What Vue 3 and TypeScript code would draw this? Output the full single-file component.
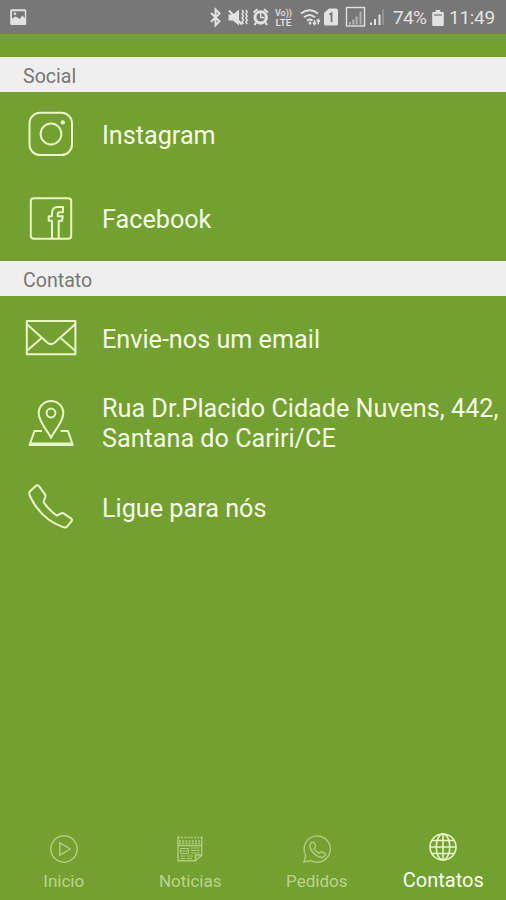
<script setup lang="ts">
import { ref } from 'vue'

type IconName = 'instagram' | 'facebook' | 'email' | 'map' | 'phone'

interface Entry {
  icon: IconName
  label: string
}

interface Section {
  title: string
  entries: Entry[]
}

const sections: Section[] = [
  {
    title: 'Social',
    entries: [
      { icon: 'instagram', label: 'Instagram' },
      { icon: 'facebook', label: 'Facebook' },
    ],
  },
  {
    title: 'Contato',
    entries: [
      { icon: 'email', label: 'Envie-nos um email' },
      { icon: 'map', label: 'Rua Dr.Placido Cidade Nuvens, 442, Santana do Cariri/CE' },
      { icon: 'phone', label: 'Ligue para nós' },
    ],
  },
]

const tabs: string[] = ['Inicio', 'Noticias', 'Pedidos', 'Contatos']
const active = ref('Contatos')
</script>

<template>
  <div class="screen">
    <header class="status">
      <svg class="picture" width="18" height="18" viewBox="0 0 18 18">
        <rect x="1.2" y="1.2" width="16" height="15.800" rx="1.500" class="solid" />
        <path d="M3 3.200h12.800v6.800l-2.500-2.500-2.500 3.500-4-2.500L3 10.500z" class="hole" />
        <circle cx="6" cy="5.700" r="1.300" class="solid" />
      </svg>
      <div class="tray">
        <svg width="174" height="34" viewBox="0 0 174 34">
          <path d="M1 13l8.500 8.300-4 4V9.500l4 4L1 21.800" class="line thick" />
          <path d="M18.500 14.500h4.500l6-5v16l-6-5h-4.500z" class="solid" />
          <path d="M19 10.500l13 14" class="line thick" />
          <path d="M32 10l1.500 2-1.500 2 1.500 2-1.500 2 1.500 2-1.500 2 1.500 2M35.800 10l1.500 2-1.500 2 1.500 2-1.500 2 1.500 2-1.500 2 1.500 2" class="line" />
          <path d="M43.500 12.500l4-3.300M54 9.200l4 3.300M46 22.500l-1.500 2.500M55.500 22.500l1.500 2.500" class="line thick" />
          <circle cx="50.700" cy="17.500" r="7.200" class="solid" />
          <circle cx="50.700" cy="17.200" r="4.300" class="hole" />
          <path d="M50.700 13v4.500h3.800" class="line" />
          <text x="65" y="15.600" class="volte" textLength="17" lengthAdjust="spacingAndGlyphs">Vo))</text>
          <text x="65.500" y="26" class="volte" textLength="16" lengthAdjust="spacingAndGlyphs">LTE</text>
          <path d="M91 13.500q8.500-6.500 17 0M94 17.200q5.500-4.500 11 0M97 20.500q2.800-2 5.500 0" class="line thick" />
          <circle cx="100" cy="23" r="1.500" class="solid" />
          <path d="M104.500 20v4m-1.500-1.500 1.500 2 1.500-2M108.300 24.500v-4.500m-1.500 1.500 1.500-2 1.500 2" class="line" />
          <path d="M119 8.500h7q2 0 2 2v13.500q0 1.500-1.500 1.500h-11q-1.500 0-1.500-1.500V13z" class="solid" />
          <path d="M119.300 14.500l2.200-1.200v8.700" class="digit" />
          <rect x="136.500" y="7.500" width="18" height="18.500" class="line" />
          <path d="M140 22v2.500M143.300 19.500v5M146.600 16.500v8" class="line thick dim" />
          <path d="M150.500 11.500v13" class="line thick dim" />
          <path d="M161 22.500v2.500M165 19v6" class="line thick" />
          <path d="M169.500 14.500V25" class="line thick" />
          <path d="M173 9v16" class="line thick faint" />
        </svg>
        <span class="level">74%</span>
        <svg class="battery" width="12" height="18" viewBox="0 0 12 18">
          <path d="M3.700 1h4.600v2h2.500q1 0 1 1v12q0 1-1 1H1.200q-1 0-1-1V4q0-1 1-1h2.500z" class="solid" />
          <path d="M2 6h8" class="mark" />
        </svg>
        <span class="clock">11:49</span>
      </div>
    </header>

    <main class="content">
      <section v-for="section in sections" :key="section.title">
        <h2 class="heading">{{ section.title }}</h2>
        <a v-for="entry in section.entries" :key="entry.label" class="entry">
          <svg class="icon" width="102" height="84" viewBox="0 0 102 84">
            <template v-if="entry.icon === 'instagram'">
              <rect x="29.500" y="20.800" width="42.500" height="42.300" rx="10.500" />
              <circle cx="51" cy="42" r="10.400" />
              <circle cx="62.700" cy="30.400" r="1.200" />
            </template>
            <template v-else-if="entry.icon === 'facebook'">
              <rect x="30.800" y="21.300" width="40.400" height="40.400" rx="3" />
              <path d="M52 61.500V43.800h-3.300v-4.500H52v-3q0-6.300 6-6.300h5v5.300h-3q-2.300 0-2.300 2v2h5l-.7 4.500h-3.300v17.700" />
            </template>
            <template v-else-if="entry.icon === 'email'">
              <rect x="26.800" y="25" width="48.600" height="33.300" />
              <path d="M27 28.200l20.500 18.500q3.500 2.800 7 0L75.200 28.200M27 54.700l14-12.300M75.200 54.700L61.200 42.400" />
            </template>
            <template v-else-if="entry.icon === 'map'">
              <path d="M51 57C49 51.200 38.700 41.200 38.700 32.200a12.300 12.300 0 0 1 24.600 0C63.300 41.200 53 51.200 51 57z" />
              <circle cx="51" cy="32" r="4.400" />
              <path d="M42 50h-7.500L29.500 64h43.300l-4.800-14h-7.500M31 62.500h40" />
            </template>
            <template v-else>
              <path d="M30 26.200l6-5.500q1.800-1 3 .5l6.200 8.500q.8 1.500-.2 3l-1.500 4.500q6 8.500 13.500 13.500l4-2.300q1.500-.7 3 .3l7.300 5q1.200 1 .2 2.500l-4.500 5.500q-1.500 1.300-4.500.2C47 56.200 36.500 44.700 30.300 31.700q-1.800-3.500-.3-5.500z" />
            </template>
          </svg>
          <span class="label">{{ entry.label }}</span>
        </a>
      </section>
    </main>

    <nav class="tabs">
      <button v-for="tab in tabs" :key="tab" class="tab" :class="{ active: tab === active }" @click="active = tab">
        <svg width="30" height="30" viewBox="0 0 30 30">
          <template v-if="tab === 'Inicio'">
            <circle cx="15" cy="15" r="13.200" />
            <path d="M10.800 8.800v12.400L21.200 15z" />
          </template>
          <template v-else-if="tab === 'Noticias'">
            <path d="M3 2.500v24.300h17.500l6.200-5.500V2.500M20.500 26.500v-5.500h6M3 11.500h23.500" />
            <path d="M3 3.500h24M4 7h22M4 9.300h22" class="dashed" />
            <path d="M5.500 14.500h8v5h-8zM6 17h7M16 14h8.500M16 16.500h8.500M16 19h8.500M5.500 22h5M12 22h6M5.500 24.500h5M12 24.500h5" class="small" />
          </template>
          <template v-else-if="tab === 'Pedidos'">
            <path d="M2 28l1.700-6.700A13.100 13.100 0 1 1 9 26.600z" />
            <path d="M9.200 8.700l1.500-.5q1.200-.2 1.800 1l1 2.600q.3 1-.6 1.900l-.8.8q2 3.500 5.200 5l1.300-1.400q.6-.7 1.500-.3l2.900 1.500q.9.600.4 1.700-.8 2.300-3.500 2.500C14 23 8 16.800 7.900 12q0-2.200 1.300-3.300z" />
          </template>
          <template v-else>
            <circle cx="15" cy="15" r="13" />
            <ellipse cx="15" cy="15" rx="6.800" ry="13" />
            <path d="M15 2v26M2 15h26M4 8.500h22M4 21.500h22" />
          </template>
        </svg>
        <span>{{ tab }}</span>
      </button>
    </nav>
  </div>
</template>

<style>
body {
  background: #73a030;
}
</style>

<style scoped>
.screen {
  display: flex;
  flex-direction: column;
  width: 506px;
  height: 900px;
  overflow: hidden;
  background: #73a030;
  color: #f4fce6;
  font-family: Roboto, "Liberation Sans", sans-serif;
}
.status {
  display: flex;
  flex: none;
  justify-content: space-between;
  align-items: center;
  height: 34px;
  padding: 0 10px 0 9px;
  background: #777;
  color: #e2e2e2;
}
.tray {
  display: flex;
  align-items: center;
  height: 34px;
}
.solid { fill: #e2e2e2; }
.hole { fill: #777; }
.line { fill: none; stroke: #e2e2e2; stroke-width: 1.4; }
.thick { stroke-width: 2; }
.dim { stroke: #b4b4b4; }
.faint { stroke: #929292; }
.digit, .mark { fill: none; stroke: #777; stroke-width: 1.8; }
.mark { stroke-width: 1.2; }
.volte { fill: #e2e2e2; font-size: 8.5px; font-weight: 500; }
.level, .clock {
  font-size: 19px;
  line-height: 34px;
  padding-top: 2px;
}
.level { width: 34px; margin-left: 9px; letter-spacing: -0.7px; }
.battery { margin: 1px 5px 0 5px; }
.clock { width: 47px; letter-spacing: -0.3px; }
.content {
  flex: 1;
  padding-top: 23px;
}
.heading {
  height: 35px;
  margin: 0;
  padding: 3px 0 0 23px;
  box-sizing: border-box;
  background: #efefef;
  color: #777;
  font-size: 19.6px;
  font-weight: 400;
  line-height: 34px;
}
.entry {
  display: flex;
  align-items: center;
  height: 84.5px;
}
.icon {
  flex: none;
  fill: none;
  stroke: #e7f7c8;
  stroke-width: 2;
  stroke-linejoin: round;
}
.label {
  font-size: 25.2px;
  line-height: 30px;
  padding-top: 3px;
}
.tabs {
  display: grid;
  grid-template-columns: repeat(4, 1fr);
  height: 72px;
  flex: none;
}
.tab {
  display: flex;
  flex-direction: column;
  align-items: center;
  gap: 5px;
  padding: 6px 0 0 1px;
  border: 0;
  background: none;
  color: #b9d48e;
  font: 17px/24px Roboto, "Liberation Sans", sans-serif;
}
.tab svg {
  flex: none;
  fill: none;
  stroke: #add07c;
  stroke-width: 1.4;
}
.dashed { stroke-dasharray: 2 1.2; stroke-width: 1.5; }
.small { stroke-width: 1; }
.tab.active {
  gap: 6px;
  padding-top: 4px;
  color: #f8ffed;
  font-size: 20px;
}
.tab.active svg {
  stroke: #e5f6c7;
  stroke-width: 1.6;
}
</style>
